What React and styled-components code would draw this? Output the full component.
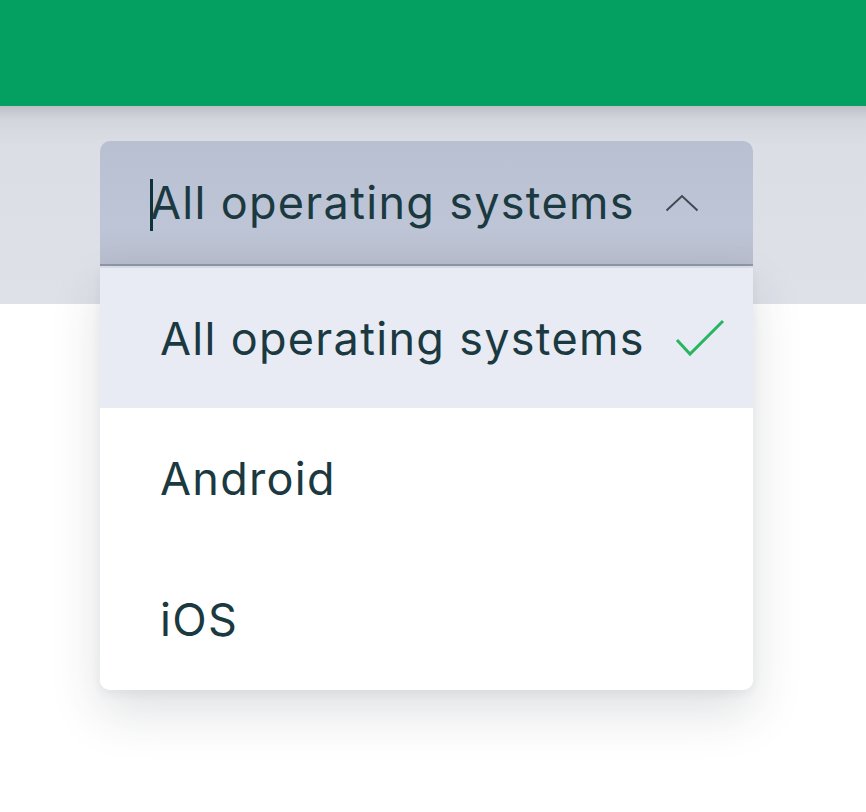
import React from 'react';
import styled, { createGlobalStyle } from 'styled-components';

const GlobalStyle = createGlobalStyle`
  html, body {
    margin: 0;
    padding: 0;
    background: #fff;
    font-family: Inter, "Noto Sans", sans-serif;
  }
`;

const Page = styled.div`
  width: 866px;
  height: 812px;
  overflow: hidden;
  background: #fff;
`;

const TopBar = styled.header`
  height: 106px;
  background-color: #03a062;
`;

const FilterBand = styled.section`
  height: 198px;
  padding: 35px 113px 0 100px;
  box-sizing: border-box;
  background: linear-gradient(to bottom, #bfc0c7 0, #d4d6dd 14px, #dcdee6 40px, #dfe1e9 100%);
`;

const SelectWrap = styled.div`
  position: relative;
  width: 653px;
`;

const Trigger = styled.div`
  height: 125px;
  box-sizing: border-box;
  display: flex;
  align-items: center;
  padding: 0 54px 0 50px;
  background: linear-gradient(to bottom, #b9c0d2 0, #bec5d6 70%, #b7bdcd 100%);
  border-radius: 10px 10px 0 0;
  border-bottom: 2px solid #8e96a8;
`;

const Caret = styled.span`
  width: 3px;
  height: 52px;
  background: #10333b;
  margin-right: -3px;
  margin-top: 4px;
`;

const Label = styled.span`
  flex: 1;
  font-size: 45px;
  letter-spacing: 1.3px;
  color: #1b3940;
`;

const Menu = styled.ul`
  position: absolute;
  top: 127px;
  left: 0;
  right: 0;
  margin: 0;
  padding: 0;
  list-style: none;
  background: #fff;
  border-radius: 0 0 10px 10px;
  overflow: hidden;
  box-shadow: 0 22px 50px rgba(40, 44, 60, 0.15), 0 4px 10px rgba(40, 44, 60, 0.06);
`;

const Option = styled.li`
  height: ${p => (p.selected ? '140px' : '141px')};
  display: flex;
  align-items: center;
  justify-content: space-between;
  padding: 0 28px 0 60px;
  box-sizing: border-box;
  font-size: 45px;
  letter-spacing: 1.3px;
  color: #1b3940;
  background: ${p => (p.selected ? '#e8ebf3' : '#fff')};
`;

const options = ['All operating systems', 'Android', 'iOS'];

function ChevronUp() {
  return (
    <svg width="34" height="18" viewBox="0 0 34 18" fill="none">
      <path d="M1.5 16.5 L17 2 L32.5 16.5" stroke="#3d4a52" strokeWidth="2" />
    </svg>
  );
}

function Check() {
  return (
    <svg width="50" height="40" viewBox="0 0 50 40" fill="none">
      <path d="M2 22 L15 36 L48 3" stroke="#27b560" strokeWidth="3" />
    </svg>
  );
}

export default function App() {
  return (
    <Page>
      <GlobalStyle />
      <TopBar />
      <FilterBand>
        <SelectWrap>
          <Trigger>
            <Caret />
            <Label>All operating systems</Label>
            <ChevronUp />
          </Trigger>
          <Menu>
            {options.map((o, i) => (
              <Option key={o} selected={i === 0}>
                {o}
                {i === 0 && <Check />}
              </Option>
            ))}
          </Menu>
        </SelectWrap>
      </FilterBand>
    </Page>
  );
}
